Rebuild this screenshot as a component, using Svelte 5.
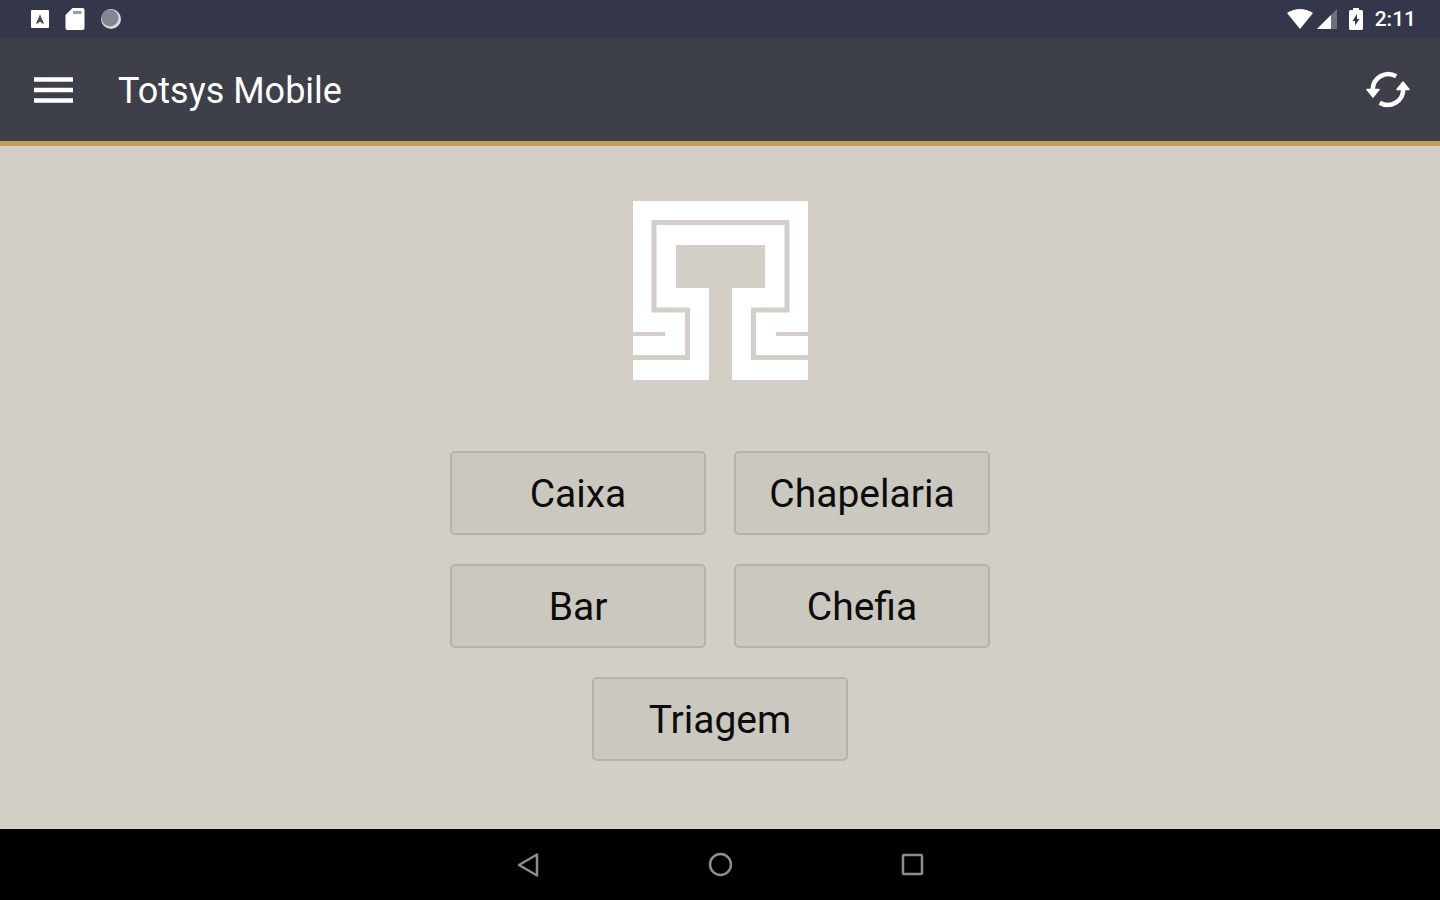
<script>
  const rows = [['Caixa', 'Chapelaria'], ['Bar', 'Chefia'], ['Triagem']];
</script>

<div class="screen">
  <div class="status">
    <div class="group notices">
      <svg width="18" height="18" viewBox="0 0 18 18" aria-hidden="true">
        <rect width="18" height="18" rx="1" fill="#fff" />
        <path d="M9 4.500 5 13.500h2.500l.5-1.500h2l.5 1.500H13z" fill="#4a4d5c" />
      </svg>
      <svg width="20" height="24" viewBox="0 0 20 24" aria-hidden="true">
        <path d="M7.500 1H17.500a2 2 0 0 1 2 2v18a2 2 0 0 1-2 2H2.500a2 2 0 0 1-2-2V8z" fill="#fff" />
        <path d="M8 5.500h8.500" stroke="#9b9da6" stroke-width="3" />
      </svg>
      <svg width="20" height="22" viewBox="0 0 20 22" aria-hidden="true">
        <circle cx="10" cy="11" r="10" fill="#d9dae0" />
        <circle cx="9" cy="10" r="8.500" fill="#85878f" />
      </svg>
    </div>
    <div class="group system">
      <svg width="26" height="21" viewBox="0 0 26 21" aria-hidden="true">
        <path d="M0 4Q13-4 26 4L13 20z" fill="#fff" />
      </svg>
      <svg class="signal" width="20" height="20" viewBox="0 0 20 20" aria-hidden="true">
        <path d="M20 0v20H0z" fill="#6f717e" />
        <path d="M14 6V20H0z" fill="#fff" />
      </svg>
      <svg width="14" height="23" viewBox="0 0 14 23" aria-hidden="true">
        <path d="M4 0h6v2h2.500A1.500 1.500 0 0 1 14 3.500v17a1.500 1.500 0 0 1-1.500 1.500h-11A1.500 1.500 0 0 1 0 20.500v-17A1.500 1.500 0 0 1 1.500 2H4z" fill="#fff" />
        <path d="M8 6 3.500 13H6v4.500L10.500 11H8z" fill="#34374a" />
      </svg>
      <time>2:11</time>
    </div>
  </div>

  <header>
    <button class="icon" aria-label="Menu">
      <svg width="40" height="28" viewBox="0 0 40 28" aria-hidden="true">
        <path d="M1 3.500h39M1 14h39M1 24.500h39" stroke="#fff" stroke-width="4.500" />
      </svg>
    </button>
    <h1>Totsys Mobile</h1>
    <button class="icon" aria-label="Atualizar">
      <svg width="44" height="38" viewBox="0 0 44 38" aria-hidden="true">
        <path d="M30.200 5.300A15.500 15.500 0 0 0 6.800 19M13.800 31.700A15.500 15.500 0 0 0 37.200 18" fill="none" stroke="#fff" stroke-width="4.500" />
        <path d="M1 18.500h12L7 26zM31 18.500h12L37 11z" fill="#fff" stroke="#fff" stroke-width="1.500" stroke-linejoin="round" />
      </svg>
    </button>
  </header>

  <main>
    <svg class="logo" width="175" height="179" viewBox="0 0 175 179" role="img" aria-label="Totsys">
      <path d="M0 0H175V179H99V87H132V44H43V87H76V179H0z" fill="#fff" />
      <path d="M0 156.500H54.500V109H21V21.500H154V109H120.500V156.500H175" fill="none" stroke="#d3cfc7" stroke-width="5" />
      <path d="M0 133H32M143 133H175" stroke="#d3cfc7" stroke-width="4" />
    </svg>
    <div class="menu">
      {#each rows as row}
        <div class="row">
          {#each row as label}
            <button class="tile">{label}</button>
          {/each}
        </div>
      {/each}
    </div>
  </main>

  <nav>
    <button class="icon" aria-label="Voltar">
      <svg width="24" height="26" viewBox="0 0 24 26" aria-hidden="true">
        <path d="M21 2.500V23.500L3 13z" />
      </svg>
    </button>
    <button class="icon" aria-label="Início">
      <svg width="24" height="26" viewBox="0 0 24 26" aria-hidden="true">
        <circle cx="12.500" cy="12.500" r="10.500" />
      </svg>
    </button>
    <button class="icon" aria-label="Recentes">
      <svg width="24" height="26" viewBox="0 0 24 26" aria-hidden="true">
        <rect x="3" y="3" width="19" height="19" rx="1" />
      </svg>
    </button>
  </nav>
</div>

<style>
  :global(body) {
    margin: 0;
    background: #000;
  }
  .screen {
    display: flex;
    flex-direction: column;
    min-height: 100vh;
    font-family: Roboto, sans-serif;
    background: #d3cfc7;
  }
  svg {
    display: block;
    flex: none;
  }
  button {
    font: inherit;
    color: inherit;
    cursor: pointer;
  }
  .icon {
    display: flex;
    padding: 0;
    border: 0;
    background: none;
  }
  .status {
    display: flex;
    align-items: center;
    justify-content: space-between;
    height: 38px;
    padding: 0 24px 0 31px;
    background: #34374a;
    color: #fff;
  }
  .group {
    display: flex;
    align-items: center;
  }
  .notices {
    gap: 16px;
  }
  .system {
    gap: 12px;
  }
  .signal {
    margin-left: -8px;
  }
  time {
    font-size: 21px;
    font-weight: 500;
    line-height: 24px;
  }
  header {
    display: flex;
    align-items: center;
    gap: 45px;
    height: 103px;
    padding: 0 30px 0 33px;
    border-bottom: 5px solid #c99c5c;
    background: #3d4048;
    color: #fff;
  }
  h1 {
    flex: 1;
    margin: 0;
    padding-top: 2px;
    font-size: 36px;
    font-weight: 400;
    line-height: 42px;
  }
  main {
    flex: 1;
    display: flex;
    flex-direction: column;
    align-items: center;
    gap: 71px;
    padding: 55px 24px;
  }
  .menu {
    display: flex;
    flex-direction: column;
    gap: 29px;
  }
  .row {
    display: flex;
    justify-content: center;
    gap: 28px;
  }
  .tile {
    width: 256px;
    padding: 18px 8px 16px;
    border: 2px solid #b5b2aa;
    border-radius: 5px;
    background: #cbc8c0;
    color: #0c0c0c;
    font-size: 39px;
    line-height: 46px;
  }
  nav {
    display: flex;
    align-items: center;
    justify-content: center;
    gap: 168px;
    height: 71px;
    background: #000;
  }
  nav svg {
    fill: none;
    stroke: #8c8c8c;
    stroke-width: 2.5;
    stroke-linejoin: round;
  }
</style>
